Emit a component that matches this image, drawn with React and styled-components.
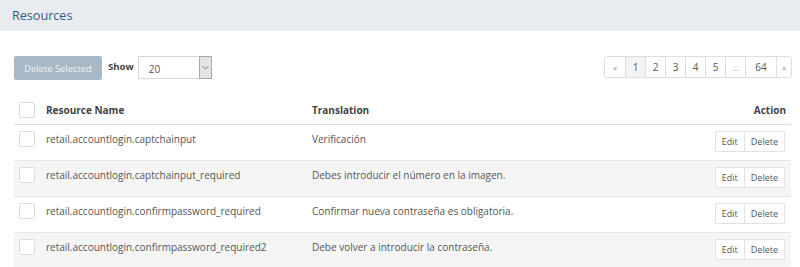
import React from 'react';
import styled, { createGlobalStyle } from 'styled-components';

const GlobalStyle = createGlobalStyle`
    body {
        margin: 0;
        background: #fff;
        font-family: "Open Sans", "Liberation Sans", sans-serif;
        color: #555;
    }
`;

const rows = [
    { name: 'retail.accountlogin.captchainput', text: 'Verificación' },
    { name: 'retail.accountlogin.captchainput_required', text: 'Debes introducir el número en la imagen.' },
    { name: 'retail.accountlogin.confirmpassword_required', text: 'Confirmar nueva contraseña es obligatoria.' },
    { name: 'retail.accountlogin.confirmpassword_required2', text: 'Debe volver a introducir la contraseña.' },
];

const pages = [
    { label: '«', muted: true },
    { label: '1', active: true },
    { label: '2' },
    { label: '3' },
    { label: '4' },
    { label: '5' },
    { label: '…', muted: true },
    { label: '64', wide: true },
    { label: '»', muted: true, narrow: true },
];

export default function App() {
    return (
        <Page>
            <GlobalStyle />
            <TitleBar>
                <Title>Resources</Title>
            </TitleBar>
            <Content>
                <Toolbar>
                    <ToolGroup>
                        <BulkButton>Delete Selected</BulkButton>
                        <ShowLabel>Show</ShowLabel>
                        <Select>
                            <SelectValue>20</SelectValue>
                            <SelectArrow>
                                <svg width="7" height="5" viewBox="0 0 7 5">
                                    <path d="M0.5 1 L3.5 4 L6.5 1" fill="none" stroke="#777" strokeWidth="1" />
                                </svg>
                            </SelectArrow>
                        </Select>
                    </ToolGroup>
                    <Pager>
                        {pages.map((p, i) => (
                            <PageItem key={i} $active={p.active} $muted={p.muted} $wide={p.wide} $narrow={p.narrow}>
                                {p.label}
                            </PageItem>
                        ))}
                    </Pager>
                </Toolbar>
                <Table>
                    <colgroup>
                        <col style={{ width: 26 }} />
                        <col style={{ width: 266 }} />
                        <col />
                        <col style={{ width: 100 }} />
                    </colgroup>
                    <thead>
                        <tr>
                            <Th><Check /></Th>
                            <Th>Resource Name</Th>
                            <Th>Translation</Th>
                            <Th $right>Action</Th>
                        </tr>
                    </thead>
                    <tbody>
                        {rows.map((r, i) => (
                            <Row key={r.name} $striped={i % 2 === 1}>
                                <Td><Check /></Td>
                                <Td>{r.name}</Td>
                                <Td>{r.text}</Td>
                                <Td $right>
                                    <BtnGroup>
                                        <SmallBtn>Edit</SmallBtn>
                                        <SmallBtn>Delete</SmallBtn>
                                    </BtnGroup>
                                </Td>
                            </Row>
                        ))}
                    </tbody>
                </Table>
            </Content>
        </Page>
    );
}

const Page = styled.div`
    width: 800px;
    height: 267px;
    overflow: hidden;
`;

const TitleBar = styled.div`
    height: 31px;
    background: #e9ecef;
    display: flex;
    align-items: center;
    padding-left: 12px;
`;

const Title = styled.h1`
    margin: 0;
    font-size: 12.6px;
    font-weight: 400;
    color: #2e5b88;
`;

const Content = styled.div`
    padding: 25px 9px 0 14px;
`;

const Toolbar = styled.div`
    display: flex;
    justify-content: space-between;
    align-items: flex-start;
    height: 24px;
    margin-bottom: 16px;
`;

const ToolGroup = styled.div`
    display: flex;
    align-items: flex-start;
`;

const BulkButton = styled.button`
    height: 24px;
    width: 88px;
    padding: 0;
    border: none;
    border-radius: 2px;
    background: #a8b8c6;
    color: #eef2f5;
    font-family: inherit;
    font-size: 9.4px;
`;

const ShowLabel = styled.span`
    margin: 4px 4px 0 6px;
    font-size: 9.6px;
    font-weight: 700;
    color: #444;
`;

const Select = styled.div`
    width: 74px;
    height: 23px;
    box-sizing: border-box;
    border: 1px solid #d7d7d7;
    display: flex;
    justify-content: space-between;
`;

const SelectValue = styled.span`
    padding: 5px 0 0 10px;
    font-size: 10px;
    color: #555;
`;

const SelectArrow = styled.span`
    width: 11px;
    margin: -1px -1px -1px 0;
    border: 1px solid #a9a9a9;
    background: #e4e4e4;
    display: flex;
    align-items: center;
    justify-content: center;
`;

const Pager = styled.div`
    display: flex;
    height: 20px;
    margin-right: -1px;
    border: 1px solid #dedede;
    border-radius: 3px;
    overflow: hidden;
`;

const PageItem = styled.span`
    width: ${p => (p.$wide ? '31px' : p.$narrow ? '15px' : '20px')};
    box-sizing: border-box;
    display: flex;
    align-items: center;
    justify-content: center;
    font-size: ${p => (p.$muted ? '8.5px' : '10px')};
    color: ${p => (p.$muted ? '#999' : '#555')};
    background: ${p => (p.$active ? '#f3f3f3' : '#fff')};
    & + & {
        border-left: 1px solid #dedede;
    }
`;

const Table = styled.table`
    width: 777px;
    table-layout: fixed;
    border-collapse: collapse;
    font-size: 10px;
`;

const Th = styled.th`
    text-align: ${p => (p.$right ? 'right' : 'left')};
    height: 28px;
    padding: 0 5px 0 6px;
    font-weight: 700;
    color: #444;
    border-bottom: 1px solid #dcdcdc;
    vertical-align: middle;
    &:first-child {
        padding-left: 5px;
    }
`;

const Row = styled.tr`
    background: ${p => (p.$striped ? '#f5f5f5' : '#fff')};
    & + & {
        border-top: 1px solid #e6e6e6;
    }
`;

const Td = styled.td`
    height: 36px;
    box-sizing: border-box;
    padding: 7px 6px 0 6px;
    text-align: ${p => (p.$right ? 'right' : 'left')};
    vertical-align: top;
    line-height: 15px;
    white-space: nowrap;
    &:first-child {
        padding-left: 5px;
        padding-top: 6px;
    }
    &:last-child {
        padding-top: 6px;
    }
`;

const Check = styled.span`
    display: block;
    width: 14px;
    height: 14px;
    border: 1px solid #dcdcdc;
    border-radius: 2px;
    background: #fff;
`;

const BtnGroup = styled.div`
    display: inline-flex;
    border: 1px solid #e2e2e2;
    border-radius: 2px;
    background: #fff;
`;

const SmallBtn = styled.span`
    height: 19px;
    padding: 0 6px;
    display: flex;
    align-items: center;
    font-size: 9px;
    color: #555;
    & + & {
        border-left: 1px solid #e2e2e2;
    }
`;
